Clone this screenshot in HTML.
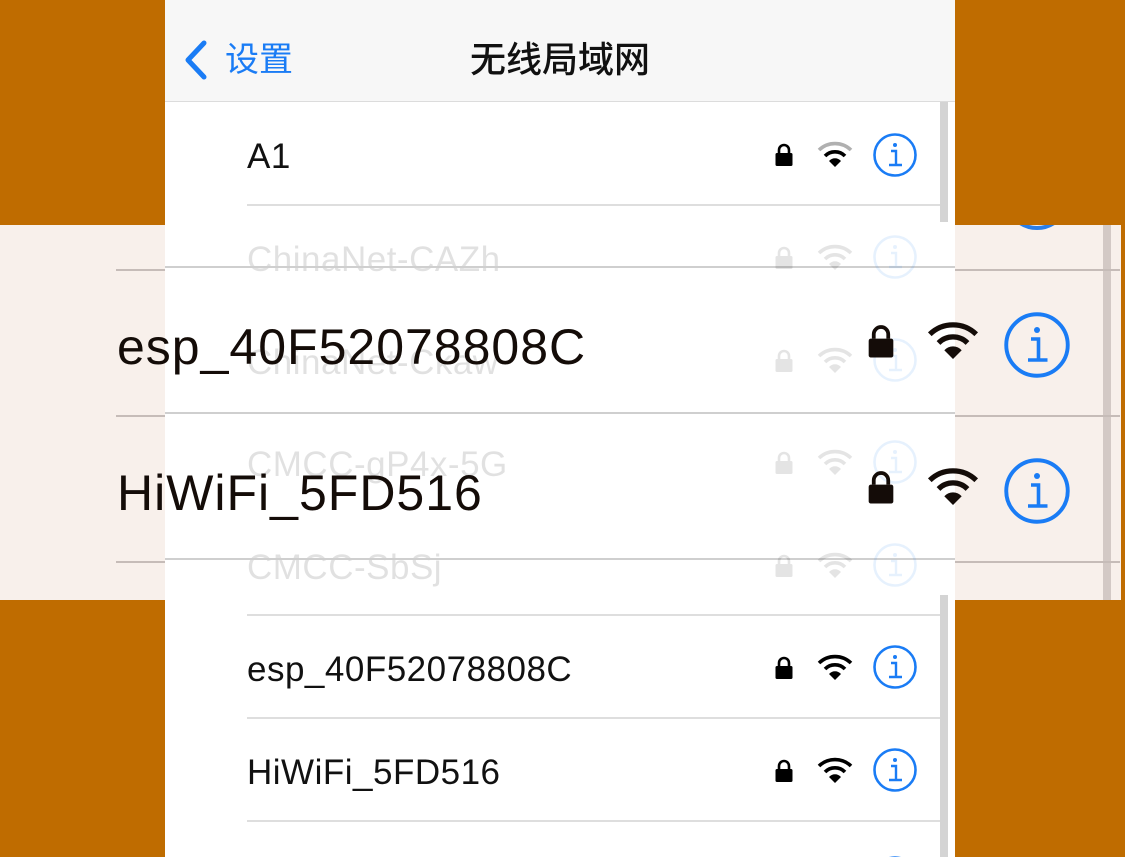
<!DOCTYPE html>
<html><head><meta charset="utf-8"><style>
*{margin:0;padding:0;box-sizing:border-box}
body{width:1125px;height:857px;overflow:hidden;background:#bf6c00;position:relative;font-family:"Liberation Sans","Noto Sans CJK SC",sans-serif}
.abs{position:absolute}
.pink{left:0;top:225px;width:1121px;height:375px;background:#f8f0eb}
.panel{left:165px;top:0;width:790px;height:857px;background:#fff}
.hdr{left:165px;top:0;width:790px;height:102px;background:#f7f7f7;border-bottom:1.5px solid #dcdcdc}
.line{height:1.5px;background:#dedede}
.st{font-size:35px;letter-spacing:0.5px;color:#111;line-height:1}
.faint{opacity:.12}
.bt{font-size:50px;letter-spacing:1px;color:#140c08;line-height:1}
.bl{height:1.5px;background:#c6bcb8}
</style></head><body>
<div class="abs pink"></div>
<div class="abs" style="left:1103px;top:225px;width:8px;height:375px;background:#d3c9c5"></div>
<svg class="abs" style="left:995px;top:225px" width="84" height="10"><circle cx="42" cy="-28" r="31" fill="none" stroke="#2a7ee8" stroke-width="4"/></svg>
<div class="abs bl" style="left:116px;top:269px;width:1004px"></div>
<div class="abs bl" style="left:116px;top:415px;width:1004px"></div>
<div class="abs bl" style="left:116px;top:561px;width:1004px"></div>

<div class="abs panel"></div>
<div class="abs hdr"></div>
<svg class="abs" style="left:180px;top:39px" width="32" height="42"><path d="M24 4 L8 21 L24 38" fill="none" stroke="#1a7cf5" stroke-width="5" stroke-linecap="round" stroke-linejoin="round"/></svg>
<div class="abs" style="left:225px;top:38px;font-size:34px;line-height:44px;color:#1a7cf5">设置</div>
<div class="abs" style="left:470px;top:37px;font-size:36px;line-height:46px;color:#111;font-weight:500">无线局域网</div>
<div class="abs" style="left:940px;top:102px;width:8px;height:120px;background:#d4d4d4"></div>
<div class="abs" style="left:940px;top:595px;width:8px;height:262px;background:#d4d4d4"></div>

<div class="abs st" style="left:247px;top:139px">A1</div>
<div class="abs line" style="left:247px;top:204px;width:693px"></div>
<div class="abs line" style="left:247px;top:614px;width:693px"></div>
<div class="abs line" style="left:247px;top:717px;width:693px"></div>
<div class="abs line" style="left:247px;top:820px;width:693px"></div>
<div class="abs st" style="left:247px;top:652px">esp_40F52078808C</div>
<div class="abs st" style="left:247px;top:755px">HiWiFi_5FD516</div>

<div class="abs faint st" style="left:247px;top:242px">ChinaNet-CAZh</div>
<div class="abs faint st" style="left:247px;top:345px">ChinaNet-Ckaw</div>
<div class="abs faint st" style="left:247px;top:447px">CMCC-gP4x-5G</div>
<div class="abs faint st" style="left:247px;top:550px">CMCC-SbSj</div>
<div class="abs line" style="left:165px;top:266px;width:790px;background:#cfcfcf"></div>
<div class="abs line" style="left:165px;top:412px;width:790px;background:#cfcfcf"></div>
<div class="abs line" style="left:165px;top:558px;width:790px;background:#cfcfcf"></div>

<svg class="abs" style="left:0;top:0" width="1125" height="857">
<defs>
<g id="lk"><path d="M-5 -3 V-6 A5 5 0 0 1 5 -6 V-3" fill="none" stroke="currentColor" stroke-width="2.6"/><rect x="-8.5" y="-3" width="17" height="13" rx="1.5" fill="currentColor"/></g>
<g id="wf"><path d="M-16 -6 A23 23 0 0 1 16 -6" fill="none" stroke="currentColor" stroke-width="3.6"/><path d="M-10 0 A14 14 0 0 1 10 0" fill="none" stroke="currentColor" stroke-width="3.6"/><path d="M-6 5 L0 11 L6 5 A8 8 0 0 0 -6 5Z" fill="currentColor"/></g>
<g id="wf2"><path d="M-16 -6 A23 23 0 0 1 16 -6" fill="none" stroke="#b0b0b0" stroke-width="3.6"/><path d="M-10 0 A14 14 0 0 1 10 0" fill="none" stroke="#000" stroke-width="3.6"/><path d="M-6 5 L0 11 L6 5 A8 8 0 0 0 -6 5Z" fill="#000"/></g>
<g id="inf"><circle r="20.5" fill="none" stroke="#1a7cf5" stroke-width="2.6"/><circle cx="0" cy="-10" r="2" fill="#1a7cf5"/><path d="M-4 -4 H1 V10 M-6 10 H7" fill="none" stroke="#1a7cf5" stroke-width="2.4"/></g>
</defs>
<g color="#000"><use href="#lk" x="784" y="156"/><use href="#wf2" x="835" y="156"/><use href="#inf" x="895" y="155"/></g>
<g color="#000"><use href="#lk" x="784" y="669"/><use href="#wf" x="835" y="669"/><use href="#inf" x="895" y="667"/></g>
<g color="#000"><use href="#lk" x="784" y="772"/><use href="#wf" x="835" y="772"/><use href="#inf" x="895" y="770"/></g>
<use href="#inf" x="895" y="878"/>
<g color="#000" opacity=".1"><use href="#lk" x="784" y="259"/><use href="#wf" x="835" y="259"/><use href="#inf" x="895" y="257"/>
<use href="#lk" x="784" y="362"/><use href="#wf" x="835" y="362"/><use href="#inf" x="895" y="360"/>
<use href="#lk" x="784" y="464"/><use href="#wf" x="835" y="464"/><use href="#inf" x="895" y="462"/>
<use href="#lk" x="784" y="567"/><use href="#wf" x="835" y="567"/><use href="#inf" x="895" y="565"/></g>
<g color="#140c08"><use href="#lk" transform="translate(881 343) scale(1.45)"/><use href="#wf" transform="translate(953 343) scale(1.45)"/><use href="#inf" transform="translate(1037 345) scale(1.5)"/>
<use href="#lk" transform="translate(881 489) scale(1.45)"/><use href="#wf" transform="translate(953 489) scale(1.45)"/><use href="#inf" transform="translate(1037 491) scale(1.5)"/></g>
</svg>

<div class="abs bt" style="left:117px;top:322px">esp_40F52078808C</div>
<div class="abs bt" style="left:117px;top:468px">HiWiFi_5FD516</div>
</body></html>
